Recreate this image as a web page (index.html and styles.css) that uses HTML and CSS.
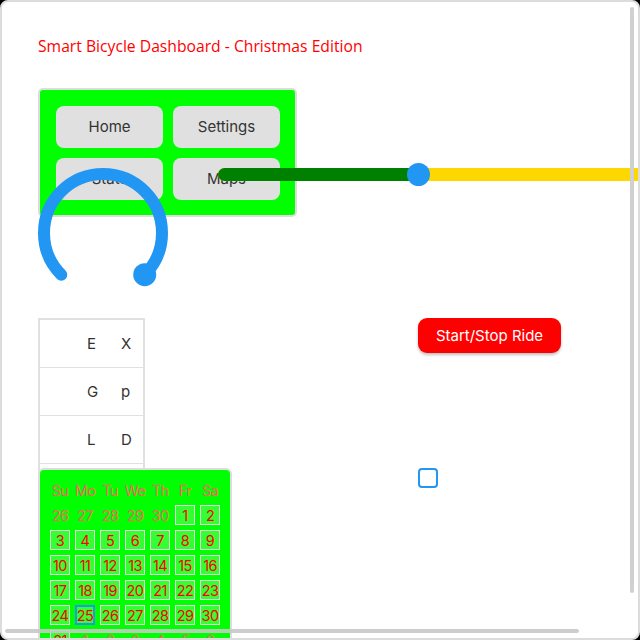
FILE: index.html
```html
<!DOCTYPE html>
<html>
<head>
<meta charset="utf-8">
<link rel="stylesheet" href="styles.css">
</head>
<body>
<div class="screen">
  <div class="content">
    <div class="title">Smart Bicycle Dashboard - Christmas Edition</div>
    <div class="btnm">
      <div class="btn">Home</div>
      <div class="btn">Settings</div>
      <div class="btn">Stats</div>
      <div class="btn">Maps</div>
    </div>
    <div class="row">
      <div class="left">
        <div class="table-wrap">
          <div class="table">
            <div class="trow"><span class="c1">E</span><span class="c2">X</span></div>
            <div class="trow"><span class="c1">G</span><span class="c2">p</span></div>
            <div class="trow"><span class="c1">L</span><span class="c2">D</span></div>
            <div class="trow"></div>
          </div>
        </div>
        <div class="calendar">
          <div class="cal-grid">
            <span class="hd">Su</span><span class="hd">Mo</span><span class="hd">Tu</span><span class="hd">We</span><span class="hd">Th</span><span class="hd">Fr</span><span class="hd">Sa</span>
            <span class="od">26</span><span class="od">27</span><span class="od">28</span><span class="od">29</span><span class="od">30</span><span class="d">1</span><span class="d">2</span>
            <span class="d">3</span><span class="d">4</span><span class="d">5</span><span class="d">6</span><span class="d">7</span><span class="d">8</span><span class="d">9</span>
            <span class="d">10</span><span class="d">11</span><span class="d">12</span><span class="d">13</span><span class="d">14</span><span class="d">15</span><span class="d">16</span>
            <span class="d">17</span><span class="d">18</span><span class="d">19</span><span class="d">20</span><span class="d">21</span><span class="d">22</span><span class="d">23</span>
            <span class="d">24</span><span class="d today">25</span><span class="d">26</span><span class="d">27</span><span class="d">28</span><span class="d">29</span><span class="d">30</span>
            <span class="d">31</span><span class="od">1</span><span class="od">2</span><span class="od">3</span><span class="od">4</span><span class="od">5</span><span class="od">6</span>
          </div>
        </div>
      </div>
      <div class="right">
        <div class="ride-btn">Start/Stop Ride</div>
        <div class="checkbox"></div>
      </div>
    </div>
  </div>

  <div class="slider">
    <div class="slider-ind"></div>
    <div class="slider-knob"></div>
  </div>

  <svg class="arc" width="130" height="130" viewBox="0 0 130 130">
    <path d="M 23.28 106.72 A 59 59 0 1 1 106.72 106.72" fill="none" stroke="#2196f3" stroke-width="12" stroke-linecap="round"/>
    <circle cx="106.72" cy="106.72" r="11.5" fill="#2196f3"/>
  </svg>

  <div class="vscroll"></div>
  <div class="hscroll"></div>
</div>
</body>
</html>
```

FILE: styles.css
```css
html, body {
  margin: 0;
  padding: 0;
  background: #000;
}

.screen {
  width: 640px;
  height: 640px;
  box-sizing: border-box;
  border: 2px solid #dcdcdc;
  border-radius: 8px;
  background: #fff;
  position: relative;
  overflow: hidden;
  font-family: "Inter", "Noto Sans", sans-serif;
  font-size: 14px;
}

.content {
  padding-left: 36px;
}

.title {
  margin-top: 34px;
  height: 20px;
  line-height: 20px;
  color: #ff0000;
  font-family: "Open Sans", "Noto Sans", sans-serif;
  font-size: 15.7px;
  white-space: nowrap;
}

.btnm {
  margin-top: 32px;
  width: 259px;
  height: 129px;
  box-sizing: border-box;
  border: 2px solid #dcdcdc;
  border-radius: 5px;
  background: #00ff00;
  padding: 16px 15px 15px 16px;
  display: grid;
  grid-template-columns: 107px 107px;
  grid-template-rows: 42px 42px;
  gap: 10px;
}

.btn {
  background: #e0e0e0;
  border-radius: 8px;
  color: #333;
  display: flex;
  align-items: center;
  justify-content: center;
  font-size: 15px;
  padding-bottom: 1px;
}

.row {
  margin-top: 101px;
  display: flex;
}

.left {
  width: 380px;
}

.table-wrap {
  height: 150px;
}

.table {
  width: 107px;
  box-sizing: border-box;
  border: 2px solid #e0e0e0;
  border-bottom: none;
  background: #fff;
}

.trow {
  height: 47px;
  border-bottom: 1px solid #e0e0e0;
  display: flex;
  align-items: center;
  color: #333;
  font-size: 15px;
}

.c1 {
  margin-left: 47px;
  width: 34px;
}

.calendar {
  position: relative;
  width: 194px;
  height: 200px;
  box-sizing: border-box;
  border: 2px solid #dcdcdc;
  border-radius: 6px;
  background: #00ff00;
  padding: 10px;
}

.cal-grid {
  display: grid;
  grid-template-columns: repeat(7, 20px);
  grid-auto-rows: 20px;
  gap: 5px;
}

.cal-grid span {
  display: flex;
  align-items: center;
  justify-content: center;
  box-sizing: border-box;
  font-size: 14.5px;
  letter-spacing: -0.6px;
  white-space: nowrap;
}

.hd, .od {
  color: #ee6b5e;
}

.d {
  color: #ff0000;
  border: 1px solid #e6e6e6;
  background: rgba(255, 255, 255, 0.2);
}

.d.today {
  border: 2px solid #2196f3;
}

.right {
  display: flex;
  flex-direction: column;
  align-items: flex-start;
}

.ride-btn {
  width: 143px;
  height: 35px;
  border-radius: 9px;
  background: #ff0000;
  color: #fff;
  font-size: 15px;
  display: flex;
  align-items: center;
  justify-content: center;
  box-shadow: 0 2px 3px rgba(0, 0, 0, 0.25);
}

.checkbox {
  margin-top: 115px;
  width: 20px;
  height: 20px;
  box-sizing: border-box;
  border: 2px solid #2196f3;
  border-radius: 4px;
  background: #fff;
}

.slider {
  position: absolute;
  left: 216px;
  top: 166px;
  width: 440px;
  height: 13px;
  border-radius: 7px;
  background: #ffd700;
}

.slider-ind {
  width: 207px;
  height: 13px;
  border-radius: 7px;
  background: #008000;
}

.slider-knob {
  position: absolute;
  left: 189px;
  top: -5px;
  width: 23px;
  height: 23px;
  border-radius: 50%;
  background: #2196f3;
}

.arc {
  position: absolute;
  left: 36px;
  top: 166px;
}

.vscroll {
  position: absolute;
  left: 628px;
  top: 5px;
  width: 4px;
  height: 586px;
  border-radius: 2px;
  background: #d0d0d0;
}

.hscroll {
  position: absolute;
  left: 3px;
  top: 627px;
  width: 574px;
  height: 4px;
  border-radius: 2px;
  background: rgba(200, 200, 200, 0.9);
}
```
